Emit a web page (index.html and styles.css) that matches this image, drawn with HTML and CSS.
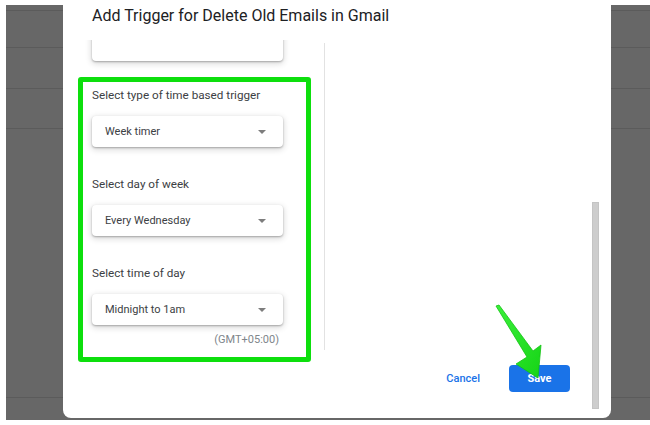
FILE: index.html
```html
<!DOCTYPE html>
<html lang="en">
<head>
<meta charset="UTF-8">
<title>Add Trigger</title>
<link rel="stylesheet" href="styles.css">
</head>
<body>
<div class="screen">
  <div class="rows">
    <div class="row r1"></div>
    <div class="row r2"></div>
    <div class="row r3"></div>
    <div class="row r4"></div>
    <div class="row r5"></div>
  </div>

  <div class="dialog">
    <div class="dialog-main">
      <h1 class="title">Add Trigger for Delete Old Emails in Gmail</h1>
      <div class="dialog-body">
        <div class="left">
          <div class="select select-cut"></div>
          <div class="highlight">
            <p class="label">Select type of time based trigger</p>
            <div class="select"><span>Week timer</span><i class="caret"></i></div>
            <p class="label">Select day of week</p>
            <div class="select"><span>Every Wednesday</span><i class="caret"></i></div>
            <p class="label">Select time of day</p>
            <div class="select"><span>Midnight to 1am</span><i class="caret"></i></div>
            <p class="tz">(GMT+05:00)</p>
          </div>
        </div>
        <div class="divider"></div>
        <div class="right">
          <div class="actions">
            <button class="btn-cancel">Cancel</button>
            <button class="btn-save">Save</button>
          </div>
        </div>
      </div>
    </div>
    <div class="scrollbar"></div>
  </div>
</div>

<svg class="pointer" width="650" height="425" viewBox="0 0 650 425">
  <defs>
    <linearGradient id="arrowfill" x1="0" y1="0" x2="1" y2="1">
      <stop offset="0" stop-color="#3bf03b"/>
      <stop offset="1" stop-color="#16d416"/>
    </linearGradient>
  </defs>
  <polygon points="496,306 499,305 533,351 541,345 538,378 516,364 527,357" fill="url(#arrowfill)" stroke="#13c313" stroke-width="0.8" stroke-linejoin="round"/>
</svg>
</body>
</html>
```

FILE: styles.css
```css
body{
  margin: 0;
  padding: 5px 0 5px 6px;
  background: #fff;
  font-family: Roboto, "Liberation Sans", sans-serif;
}
*, *:before, *:after{
  box-sizing: border-box;
}
.screen{
  position: relative;
  height: 415px;
  background: #676767;
}

/* page rows behind the modal */
.row{
  border-bottom: 1px solid #5b5b5b;
}
.r1{ height: 6px; }
.r2{ height: 37px; }
.r3{ height: 41px; }
.r4{ height: 40px; }
.r5{ height: 269px; }

/* modal */
.dialog{
  position: absolute;
  left: 57px;
  top: -5px;
  width: 548px;
  height: 418px;
  background: #fff;
  border-radius: 0 0 8px 8px;
  display: flex;
}
.dialog-main{
  flex: 1;
  display: flex;
  flex-direction: column;
}
.title{
  margin: 0;
  height: 40px;
  padding: 4px 0 0 29px;
  font-size: 16px;
  line-height: 24px;
  font-weight: 400;
  color: #202124;
}
.dialog-body{
  flex: 1;
  display: flex;
}
.left{
  width: 261px;
  overflow: hidden;
}
.divider{
  width: 1px;
  background: #e2e2e2;
  margin: 3px 0 68px;
}
.right{
  flex: 1;
  display: flex;
  align-items: flex-end;
  justify-content: flex-end;
  padding: 0 22px 26px 0;
}
.scrollbar{
  width: 7px;
  margin: 202px 12px 9px 0;
  background: #cdcdcd;
  border: 1px solid #c4c4c4;
}

/* selects */
.select{
  width: 191px;
  height: 31px;
  border-radius: 4px;
  background: #fff;
  box-shadow: 0 1px 2px rgba(0,0,0,0.28), 0 2px 6px 1px rgba(0,0,0,0.14);
  display: flex;
  align-items: center;
  justify-content: space-between;
  padding: 0 17px 0 13px;
  font-size: 11px;
  color: #3c4043;
}
.select-cut{
  margin: -10px 0 0 29px;
}
.caret{
  width: 0;
  height: 0;
  border-left: 4.5px solid transparent;
  border-right: 4.5px solid transparent;
  border-top: 4.5px solid #7d7d7d;
}

/* green annotation box */
.highlight{
  margin: 16px 0 0 15px;
  width: 233px;
  border: 5px solid #0ddf0d;
  border-radius: 3px;
  padding: 5px 22px 10px 9px;
}
.label{
  margin: 0 0 13px;
  font-size: 11.7px;
  line-height: 16px;
  color: #3c4043;
}
.select + .label{
  margin-top: 29px;
}
.tz{
  margin: 8px 0 0;
  text-align: right;
  padding-right: 5px;
  font-size: 11px;
  line-height: 14px;
  color: #80868b;
}

/* footer */
.actions{
  display: flex;
  align-items: center;
}
.btn-cancel{
  border: 0;
  background: none;
  font-family: Roboto, "Liberation Sans", sans-serif;
  font-size: 11px;
  font-weight: 500;
  color: #1a73e8;
  padding: 0 12px;
  margin-right: 17px;
}
.btn-save{
  width: 61px;
  height: 27px;
  border: 0;
  border-radius: 4px;
  background: #1a73e8;
  color: #fff;
  font-family: Roboto, "Liberation Sans", sans-serif;
  font-size: 11px;
  font-weight: 700;
}

.pointer{
  position: absolute;
  left: 0;
  top: 0;
  pointer-events: none;
}
```
